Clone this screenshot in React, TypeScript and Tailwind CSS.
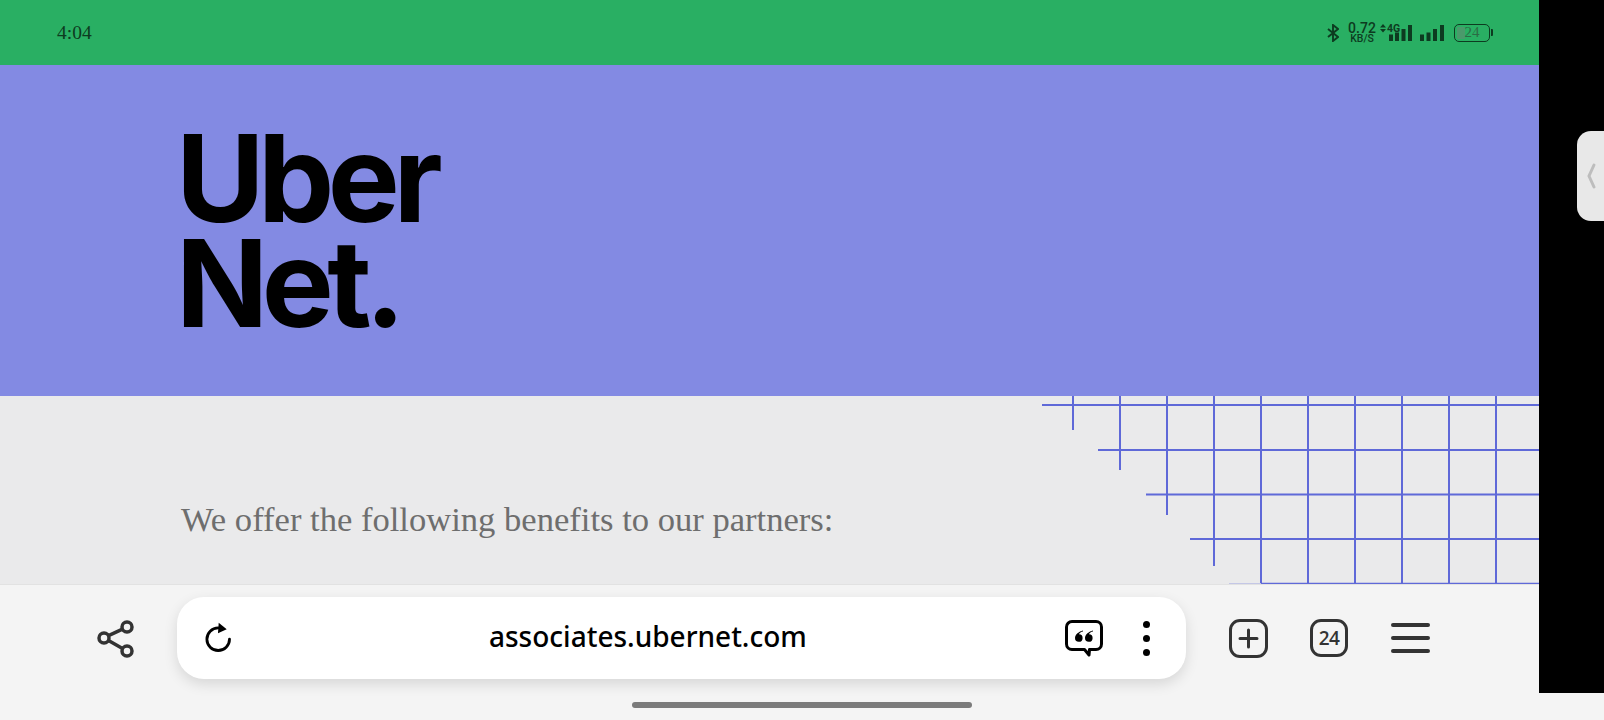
import React from 'react';

const serif = "font-['Liberation_Serif',serif]";

const gridX = [1073, 1120, 1167, 1214, 1261, 1308, 1355, 1402, 1449, 1496];
const gridEnds = [430, 470, 515, 566, 584, 584, 584, 584, 584, 584];
const gridRows = [
  { y: 405, from: 1042 },
  { y: 450, from: 1098 },
  { y: 494.5, from: 1146 },
  { y: 539, from: 1190 },
];

const GridPattern: React.FC = () => (
  <svg className="absolute left-0 top-0" width="1539" height="188" viewBox="0 396 1539 188" fill="none">
    {gridX.map((x, i) => (
      <line key={x} x1={x} x2={x} y1="396" y2={gridEnds[i]} stroke="#5f69d8" strokeWidth="2" />
    ))}
    {gridRows.map((r) => (
      <line key={r.y} x1={r.from} x2="1539" y1={r.y} y2={r.y} stroke="#5f69d8" strokeWidth="2" />
    ))}
    <line x1="1229" x2="1261" y1="583.5" y2="583.5" stroke="#c4c7e6" strokeWidth="1" />
    <line x1="1261" x2="1539" y1="583.5" y2="583.5" stroke="#5f69d8" strokeWidth="1.4" />
  </svg>
);

const StatusIcons: React.FC = () => (
  <div className="flex items-center text-[#0d3b20]">
    <svg width="12" height="18" viewBox="0 0 12 18" fill="none" stroke="currentColor" strokeWidth="1.9">
      <path d="M1 5l10 8-5 4V1l5 4-10 8" />
    </svg>
    <div className="ml-[8px] flex w-[30px] flex-col items-center font-['Roboto',sans-serif] leading-none">
      <span className="text-[14px] font-medium leading-[12px]">0.72</span>
      <span className="text-[10.500px] font-medium leading-[10px]">KB/S</span>
    </div>
    <svg className="ml-[3px]" width="37" height="18" viewBox="0 0 37 18" fill="currentColor">
      <path d="M3 0l3 3.400H0zM3 8.400L0 5h6z" />
      <text x="7" y="8.400" fontSize="10.500" fontWeight="700" fontFamily="Roboto, sans-serif">4G</text>
      <rect x="9" y="10.500" width="4" height="6.500" />
      <rect x="15" y="8.500" width="4" height="8.500" />
      <rect x="21.500" y="5" width="4" height="12" />
      <rect x="28" y="1" width="4" height="16" />
    </svg>
    <svg className="ml-[2px]" width="26" height="18" viewBox="0 0 26 18" fill="currentColor">
      <rect x="1" y="10.500" width="4" height="6.500" />
      <rect x="7.500" y="8.500" width="4" height="8.500" />
      <rect x="14" y="5" width="4" height="12" />
      <rect x="21" y="1" width="4" height="16" />
    </svg>
    <div className={`relative ml-[9px] flex h-[18px] w-[36px] items-center justify-center rounded-[5px] border border-[#0d3b20] text-[15px] leading-none ${serif}`}>
      <div className="absolute left-[2px] top-[2px] h-[12px] w-[8px] rounded-[1px] bg-[#4a9a6b]" />
      <span className="relative text-[#2c6b45]">24</span>
    </div>
    <div className="ml-[1px] h-[7px] w-[2px] rounded-r-[1px] bg-[#0d3b20]" />
  </div>
);

const ShareIcon: React.FC = () => (
  <svg width="40" height="40" viewBox="0 0 40 40" fill="none" stroke="#333" strokeWidth="3.500">
    <circle cx="31" cy="9" r="5" />
    <circle cx="8" cy="20" r="5" />
    <circle cx="31" cy="33" r="5" />
    <path d="M12.500 17.600l14-6.400M12.500 22.400l14 8" />
  </svg>
);

const ReloadIcon: React.FC = () => (
  <svg width="28" height="32" viewBox="0 0 28 32" fill="none">
    <path d="M14.200 5.900A11.300 11.300 0 1 0 25.500 17.200" stroke="#000" strokeWidth="2.800" strokeLinecap="round" />
    <path d="M14.700.700l8 6.600-8.700 4z" fill="#000" />
  </svg>
);

const QuoteIcon: React.FC = () => (
  <svg width="38" height="37" viewBox="0 0 38 37" fill="none">
    <path
      d="M7 1.500h24a5.500 5.500 0 0 1 5.500 5.500v17a5.500 5.500 0 0 1-5.500 5.500h-6.500l-.5 5.500-4.500-5.500H7A5.500 5.500 0 0 1 1.500 24V7A5.500 5.500 0 0 1 7 1.500z"
      stroke="#000"
      strokeWidth="3"
      strokeLinejoin="round"
    />
    <path
      d="M18 10.500c-4 1-8 4-8 7.500a3.800 3.800 0 1 0 4-3.800c.5-1.300 2-2.300 4-2.600zM28 10.500c-4 1-8 4-8 7.500a3.800 3.800 0 1 0 4-3.800c.5-1.300 2-2.300 4-2.600z"
      fill="#000"
    />
  </svg>
);

const App: React.FC = () => {
  return (
    <div className="flex h-[720px] w-[1604px] flex-col overflow-hidden bg-[#f4f4f4]">
      <div className="relative flex h-[693px]">
        <div className="flex w-[1539px] flex-col">
          <div className="flex h-[65px] items-center justify-between bg-[#29af63] pl-[57px] pr-[46px]">
            <span className={`text-[19.500px] leading-none text-[#0d3b20] ${serif}`}>4:04</span>
            <StatusIcons />
          </div>

          <div className="h-[331px] bg-[#838ae3] pl-[176px] pt-[61px]">
            <div className="font-['Inter',sans-serif] text-[121px] font-[670] leading-[105px] tracking-[-6.500px] text-black">
              Uber
              <br />
              Net.
            </div>
          </div>

          <div className="relative h-[188px] bg-[#eaeaeb] pl-[181px] pt-[101px]">
            <GridPattern />
            <p className={`relative text-[34.600px] leading-[44px] text-[#6e6e6e] ${serif}`}>
              We offer the following benefits to our partners:
            </p>
          </div>

          <div className="flex h-[109px] items-start border-t border-[#e2e2e2] bg-[#f4f4f4] pl-[96px] pt-[12px]">
            <div className="flex h-[82px] items-center">
              <ShareIcon />
              <div className="ml-[41px] flex h-[82px] w-[1009px] items-center rounded-[27px] bg-white pl-[27px] pr-[36px] shadow-[0_5px_14px_rgba(0,0,0,0.12)]">
                <ReloadIcon />
                <span className="mb-[4px] ml-[257px] font-['Noto_Sans',sans-serif] text-[28px] font-medium leading-none text-black">
                  associates.ubernet.com
                </span>
                <div className="ml-auto flex items-center gap-[40px]">
                  <QuoteIcon />
                  <div className="flex flex-col gap-[7px]">
                    <div className="h-[7px] w-[7px] rounded-full bg-black" />
                    <div className="h-[7px] w-[7px] rounded-full bg-black" />
                    <div className="h-[7px] w-[7px] rounded-full bg-black" />
                  </div>
                </div>
              </div>
              <div className="ml-[43px] flex h-[39px] w-[39px] items-center justify-center rounded-[11px] border-[3px] border-[#333]">
                <svg width="21" height="21" viewBox="0 0 21 21" stroke="#333" strokeWidth="3" strokeLinecap="round">
                  <path d="M10.500 2v17M2 10.500h17" />
                </svg>
              </div>
              <div className="ml-[42px] flex h-[38px] w-[38px] items-center justify-center rounded-[11px] border-[3px] border-[#333] font-['Open_Sans',sans-serif] text-[19px] font-semibold tracking-[-0.500px] text-[#333]">
                24
              </div>
              <div className="ml-[43px] flex w-[39px] flex-col gap-[9px]">
                <div className="h-[4px] rounded-full bg-[#333]" />
                <div className="h-[4px] rounded-full bg-[#333]" />
                <div className="h-[4px] rounded-full bg-[#333]" />
              </div>
            </div>
          </div>
        </div>

        <div className="w-[65px] bg-black" />

        <div className="absolute right-0 top-[131px] flex h-[90px] w-[27px] items-center rounded-l-[14px] bg-[#e8e8e8] pl-[10px]">
          <svg width="10" height="26" viewBox="0 0 10 26" fill="none" stroke="#bdbdbd" strokeWidth="3" strokeLinecap="round">
            <path d="M7 2L2 13l5 11" />
          </svg>
        </div>
      </div>

      <div className="flex h-[27px] justify-center pt-[9px]">
        <div className="h-[6px] w-[340px] rounded-full bg-[#7b7b7b]" />
      </div>
    </div>
  );
};

export default App;
